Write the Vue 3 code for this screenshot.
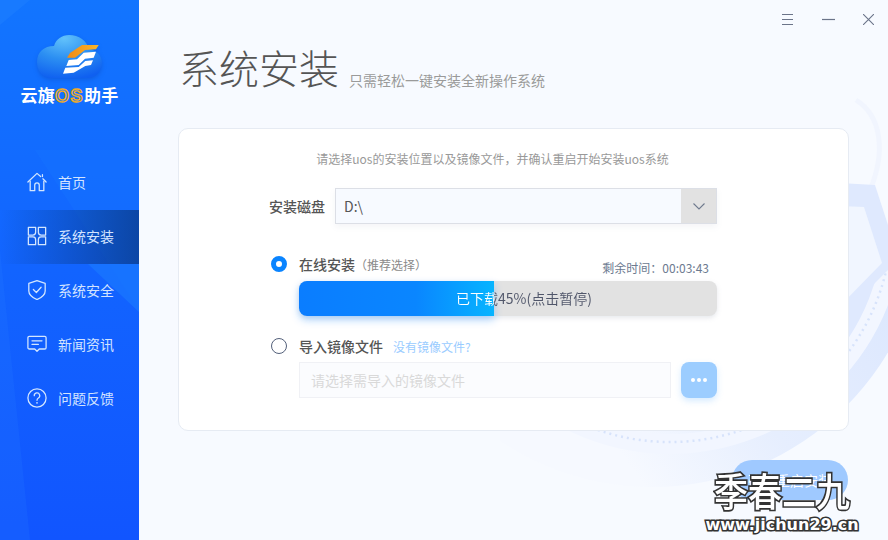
<script setup>
const navItems = [
  { label: '首页', icon: 'home' },
  { label: '系统安装', icon: 'grid', active: true },
  { label: '系统安全', icon: 'shield' },
  { label: '新闻资讯', icon: 'news' },
  { label: '问题反馈', icon: 'help' }
]
const dlPct = 45
</script>

<template>
  <div class="app">
    <aside class="side">
      <svg class="side-bg" width="139" height="540" viewBox="0 0 139 540">
        <polygon points="0,0 30,0 0,25" fill="#2a8cff" opacity=".25" />
        <polygon points="0,250 30,540 0,540" fill="#2a7cff" opacity=".2" />
        <polygon points="35,150 139,150 139,310" fill="#1f86ff" opacity=".14" />
        <polygon points="88,264 139,264 139,312" fill="#1a78ff" opacity=".7" />
      </svg>
      <div class="logo">
        <svg class="cloud" width="65" height="43" viewBox="0 0 65 43">
          <defs>
            <radialGradient id="cg" cx=".42" cy=".08" r=".95">
              <stop offset="0" stop-color="#62c2fb" />
              <stop offset=".5" stop-color="#2c8ff2" />
              <stop offset="1" stop-color="#0f60f0" />
            </radialGradient>
            <linearGradient id="og" x1="0" x2="1">
              <stop offset="0" stop-color="#f08a14" />
              <stop offset="1" stop-color="#fbb62a" />
            </linearGradient>
          </defs>
          <path d="M14 43 C5 43 0 36 0 27 C0 17 7 11 17 11 C19 4 25 0 32 0 C42 0 50 6 52 14 C60 15 65 21 65 28 C65 37 58 43 50 43 Z" fill="url(#cg)" />
          <path d="M45 10 L61.700 10 L59 14.300 L48 15 L38 22.700 L30 22.700 L33 18 Z" fill="url(#og)" />
          <path d="M31.700 25 L40 24.300 L46.700 17.700 L59 16.700 L56.700 22.700 L48 23.700 L41.700 30 L29.300 31 Z" fill="#fff" />
          <path d="M28.300 32.700 L41.700 32 L48.300 26 L56 25.300 L54 30 L48.300 31 L36.700 37.700 L26 38.700 Z" fill="#fff" />
        </svg>
        <div class="brand">云旗<span class="os">OS</span>助手</div>
      </div>
      <nav class="nav">
        <div v-for="item in navItems" :key="item.label" class="nav-item" :class="{ active: item.active }">
          <svg class="nav-icon" width="20" height="20" viewBox="0 0 22 22" fill="none" stroke="#d3e6ff" stroke-width="1.400" stroke-linejoin="round" stroke-linecap="round">
            <template v-if="item.icon === 'home'">
              <path d="M1 11 L11 1.500 L15 5 M17 5 L17 3 M21 11 L17.500 7.500" />
              <path d="M3.500 10 V20.500 H8.500 V14.500 A2.500 2.500 0 0 1 13.500 14.500 V20.500 H18.500 V10" />
            </template>
            <template v-else-if="item.icon === 'grid'">
              <path d="M1.500 1.500 H9.500 V7 A3 3 0 0 1 6.500 10 H1.500 Z" />
              <path d="M20.500 1.500 H12.500 V7 A3 3 0 0 0 15.500 10 H20.500 Z" />
              <path d="M1.500 20.500 H9.500 V15 A3 3 0 0 0 6.500 12 H1.500 Z" />
              <path d="M20.500 20.500 H12.500 V15 A3 3 0 0 1 15.500 12 H20.500 Z" />
            </template>
            <template v-else-if="item.icon === 'shield'">
              <path d="M11 .8 L20 3.800 V12 C20 17 15.500 19.500 11 21.500 C6.500 19.500 2 17 2 12 V3.800 Z" />
              <path d="M7 10.500 L10.300 13.800 L15.500 8" />
            </template>
            <template v-else-if="item.icon === 'news'">
              <path d="M2.500 2.500 H19.500 A1.500 1.500 0 0 1 21 4 V15 A1.500 1.500 0 0 1 19.500 16.500 H13.500 L11 19 L8.500 16.500 H2.500 A1.500 1.500 0 0 1 1 15 V4 A1.500 1.500 0 0 1 2.500 2.500 Z" />
              <path d="M5.500 7.500 H16.500 M5.500 11.500 H12.500" />
            </template>
            <template v-else>
              <circle cx="11" cy="11" r="10" />
              <path d="M8 8.500 A3 3 0 1 1 12.500 11 Q11 11.800 11 13.500" />
              <path d="M11 16.300 V16.500" stroke-width="1.800" />
            </template>
          </svg>
          <span>{{ item.label }}</span>
        </div>
      </nav>
    </aside>

    <main class="main">
      <svg class="main-bg" width="749" height="540" viewBox="139 0 749 540">
        <defs>
          <linearGradient id="band" gradientUnits="userSpaceOnUse" x1="888" y1="300" x2="640" y2="480">
            <stop offset="0" stop-color="#dde8fe" />
            <stop offset=".55" stop-color="#e6eefe" />
            <stop offset="1" stop-color="#f6f9ff" />
          </linearGradient>
          <clipPath id="lower"><polygon points="888,270 848,310 500,310 500,540 888,540" /></clipPath>
        </defs>
        <path d="M856 100 C880 115 888 150 868 195" fill="none" stroke="#f1f5fe" stroke-width="5" />
        <circle cx="652" cy="213" r="274" fill="url(#band)" clip-path="url(#lower)" />
        <polygon points="840,183 875,185 888,225 888,295 840,345" fill="#dfe9fe" />
        <polygon points="840,206 864,207 882,263 840,306" fill="#f1f6ff" />
        <circle cx="670" cy="220" r="224" fill="none" stroke="#f2f6ff" stroke-width="20" clip-path="url(#lower)" />
        <circle cx="670" cy="220" r="222" fill="none" stroke="#d7e3fb" stroke-width="2.500" stroke-dasharray="2 4" clip-path="url(#lower)" />
      </svg>

      <div class="winbar">
        <svg width="11" height="11" viewBox="0 0 11 11" stroke="#6b7489" stroke-width="1.100" fill="none"><path d="M0 .5 H11 M0 5.500 H11 M0 10.500 H11" /></svg>
        <svg width="13" height="11" viewBox="0 0 13 11" stroke="#6b7489" stroke-width="1.200" fill="none"><path d="M0 5.500 H13" /></svg>
        <svg width="11" height="11" viewBox="0 0 11 11" stroke="#6b7489" stroke-width="1.100" fill="none"><path d="M0 0 L11 11 M11 0 L0 11" /></svg>
      </div>

      <header class="title-row">
        <h1>系统安装</h1>
        <p>只需轻松一键安装全新操作系统</p>
      </header>

      <section class="card">
        <p class="hint">请选择uos的安装位置以及镜像文件，并确认重启开始安装uos系统</p>
        <div class="disk-row">
          <label>安装磁盘</label>
          <div class="select">
            <span class="sel-val">D:\</span>
            <span class="sel-arrow">
              <svg width="12" height="7" viewBox="0 0 12 7" fill="none" stroke="#6f7a8e" stroke-width="1.100"><path d="M.5 .5 L6 6 L11.500 .5" /></svg>
            </span>
          </div>
        </div>

        <div class="opt-block online">
          <div class="opt-head">
            <span class="radio on"></span>
            <strong>在线安装</strong>
            <em>（推荐选择）</em>
            <span class="remain">剩余时间：00:03:43</span>
          </div>
          <div class="progress">
            <div class="bar" :style="{ width: (dlPct * 1.037) + '%' }"></div>
            <span class="ptext">已下载45%(点击暂停)</span>
          </div>
        </div>

        <div class="opt-block local">
          <div class="opt-head">
            <span class="radio"></span>
            <strong>导入镜像文件</strong>
            <a>没有镜像文件?</a>
          </div>
          <div class="file-row">
            <div class="file-input">请选择需导入的镜像文件</div>
            <button class="more"><i></i><i></i><i></i></button>
          </div>
        </div>
      </section>

      <div class="actions">
        <button class="primary">确认重启安装</button>
      </div>
    </main>

    <div class="watermark">
      <div class="wm-cn">季春二九</div>
      <div class="wm-en">www.jichun29.cn</div>
    </div>
  </div>
</template>

<style>
html, body { margin: 0; overflow: hidden; }
</style>

<style scoped>
.app {
  position: relative;
  width: 888px;
  height: 540px;
  display: flex;
  overflow: hidden;
  font-family: "Noto Sans CJK SC", "Noto Sans", sans-serif;
  background: #f7faff;
}
.side {
  position: relative;
  width: 139px;
  flex: none;
  background: linear-gradient(180deg, #1275ff 0%, #1264ff 50%, #1155ff 100%);
  color: #d8e8ff;
}
.side-bg { position: absolute; left: 0; top: 0; }
.logo {
  position: relative;
  height: 156px;
  box-sizing: border-box;
  padding-top: 35px;
  display: flex;
  flex-direction: column;
  align-items: center;
}
.cloud { filter: drop-shadow(0 2px 2px rgba(10, 60, 170, .3)); }
.brand {
  margin-top: 5px;
  font-size: 17px;
  line-height: 24px;
  font-weight: 700;
  color: #fff;
  white-space: nowrap;
  letter-spacing: .2px;
}
.os {
  font-family: "Liberation Sans", sans-serif;
  font-size: 18px;
  font-weight: 700;
  letter-spacing: 1.500px;
  color: #2f7fe6;
  -webkit-text-stroke: 1.300px #f3ab24;
}
.nav { position: relative; }
.nav-item {
  height: 54px;
  box-sizing: border-box;
  display: flex;
  align-items: center;
  padding: 0 0 2px 27px;
  font-size: 14px;
  color: #d3e4ff;
}
.nav-item.active { background: linear-gradient(90deg, rgba(10, 60, 150, 0) 0%, rgba(10, 60, 140, .78) 100%); }
.nav-icon { flex: none; margin-right: 11px; }

.main {
  position: relative;
  flex: 1;
  min-width: 0;
  display: flex;
  flex-direction: column;
  padding: 0 39px;
}
.main-bg { position: absolute; left: 0; top: 0; }
.winbar {
  position: relative;
  height: 40px;
  margin-right: -25px;
  display: flex;
  justify-content: flex-end;
  gap: 28.500px;
  padding-top: 14px;
  box-sizing: border-box;
}
.title-row {
  position: relative;
  display: flex;
  align-items: flex-start;
  height: 92px;
  margin: -4px 0 0;
  padding-left: 1px;
}
h1 {
  margin: 0;
  font-size: 40px;
  line-height: 62px;
  font-weight: 300;
  color: #555;
  white-space: nowrap;
}
.title-row p {
  margin: 34px 0 0 10px;
  font-size: 14px;
  line-height: 20px;
  color: #9a9a9a;
}
.card {
  position: relative;
  width: 671px;
  height: 303px;
  box-sizing: border-box;
  background: #fff;
  border: 1px solid #e6ebf3;
  border-radius: 10px;
  padding: 20px 131px 0 91px;
}
.hint {
  margin: 0;
  font-size: 12px;
  line-height: 20px;
  color: #999;
  text-align: center;
  white-space: nowrap;
  transform: translateX(-1px);
}
.disk-row {
  display: flex;
  align-items: center;
  margin-top: 19px;
  margin-left: -1px;
}
.disk-row label { font-size: 14px; font-weight: 500; color: #555; width: 66px; flex: none; white-space: nowrap; }
.select {
  flex: 1;
  height: 36px;
  box-sizing: border-box;
  display: flex;
  align-items: stretch;
  background: #f7faff;
  border: 1px solid #dcdfe6;
  box-shadow: 0 3px 6px rgba(120, 130, 150, .08);
}
.sel-val { flex: 1; font-size: 14px; color: #555; line-height: 34px; padding-left: 8px; }
.sel-arrow {
  width: 35px;
  display: flex;
  align-items: center;
  justify-content: center;
  background: #e2e2e2;
}
.opt-block { padding-left: 1px; }
.online { margin-top: 30px; }
.local { margin-top: 20px; }
.opt-head {
  position: relative;
  display: flex;
  align-items: center;
  height: 20px;
  white-space: nowrap;
}
.radio {
  box-sizing: border-box;
  width: 16px;
  height: 16px;
  border-radius: 50%;
  border: 1px solid #53607a;
  margin-right: 12px;
  flex: none;
  background: #fff;
}
.radio.on { border: 5px solid #0a84ff; }
.opt-head strong { font-size: 14px; font-weight: 500; color: #555; }
.opt-head em { font-style: normal; font-size: 12px; color: #8a8a8a; }
.opt-head a { font-size: 12px; color: #9accff; margin-left: 10px; }
.remain {
  position: absolute;
  right: 8px;
  top: 5px;
  font-size: 12px;
  color: #6c7a90;
}
.progress {
  position: relative;
  margin: 7px 0 0 28px;
  height: 35px;
  box-sizing: border-box;
  padding-bottom: 2px;
  border-radius: 8px;
  background: #e2e2e2;
  box-shadow: 0 2px 5px rgba(130, 140, 160, .2);
  display: flex;
  align-items: center;
  justify-content: center;
}
.bar {
  position: absolute;
  left: 0;
  top: 0;
  bottom: 0;
  border-radius: 8px 0 0 8px;
  background: linear-gradient(90deg, #0a7dff 0%, #0a86ff 60%, #06b4ff 100%);
  box-shadow: 0 4px 8px rgba(10, 130, 255, .3);
}
.ptext {
  position: relative;
  margin-left: 32px;
  font-size: 14px;
  width: 136px;
  white-space: nowrap;
  color: transparent;
  background: linear-gradient(90deg, #fff 38px, #50566a 38px);
  -webkit-background-clip: text;
  background-clip: text;
}
.file-row { display: flex; margin: 6px 0 0 28px; gap: 10px; }
.file-input {
  flex: 1;
  height: 36px;
  box-sizing: border-box;
  border: 1px solid #f0f1f5;
  background: #fbfcfe;
  font-size: 14px;
  line-height: 34px;
  padding-left: 11px;
  color: #d9d9d9;
}
.more {
  width: 36px;
  height: 36px;
  border: 0;
  padding: 0;
  border-radius: 8px;
  background: #9ccdff;
  box-shadow: 0 3px 6px rgba(120, 190, 255, .3);
  display: flex;
  align-items: center;
  justify-content: center;
  gap: 2px;
}
.more i { width: 4px; height: 4px; border-radius: 50%; background: #fff; }
.actions { position: relative; display: flex; justify-content: flex-end; margin-top: 29px; }
.primary {
  width: 116px;
  height: 40px;
  border: 0;
  border-radius: 20px;
  background: #9fc9ff;
  color: #fff;
  font-size: 14px;
  font-family: inherit;
  margin-right: 1px;
}
.watermark {
  position: absolute;
  left: 697px;
  top: 466px;
  width: 170px;
  text-align: center;
  color: #fff;
  font-family: "Noto Sans CJK SC", sans-serif;
  -webkit-text-stroke: 3px #333;
  paint-order: stroke fill;
}
.wm-cn { font-size: 34px; line-height: 48px; font-weight: 500; transform: scaleY(1.12); white-space: nowrap; }
.wm-en {
  font-family: "DejaVu Sans", sans-serif;
  font-size: 16px;
  font-weight: 700;
  line-height: 18px;
  margin-top: 2px;
  white-space: nowrap;
}
</style>
